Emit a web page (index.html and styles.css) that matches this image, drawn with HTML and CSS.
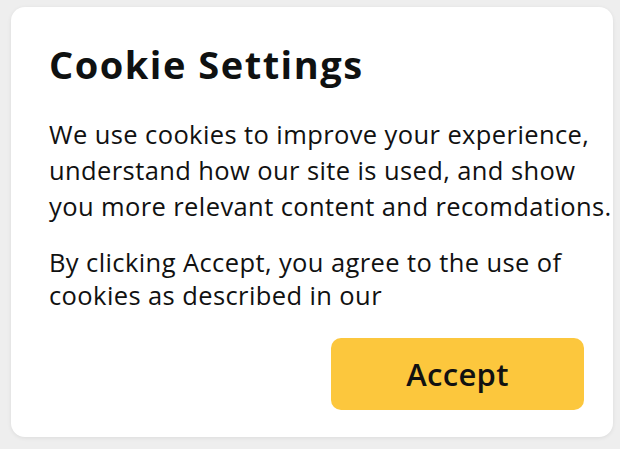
FILE: index.html
```html
<!DOCTYPE html>
<html>
<head>
<meta charset="utf-8">
<link rel="stylesheet" href="styles.css">
</head>
<body>
<div class="card">
  <h1 class="title">Cookie Settings</h1>
  <p class="text">We use cookies to improve your experience,<br>understand how our site is used, and show<br>you more relevant content and recomdations.</p>
  <p class="text second">By clicking Accept, you agree to the use of<br>cookies as described in our</p>
  <div class="actions">
    <button class="accept">Accept</button>
  </div>
</div>
</body>
</html>
```
FILE: styles.css
```css
html, body {
  margin: 0;
  padding: 0;
  background: #eeeeee;
}
body {
  width: 620px;
  height: 449px;
  padding: 7px 7px 12px 11px;
  box-sizing: border-box;
  font-family: "Open Sans", "Noto Sans", sans-serif;
  color: #111111;
}
.card {
  background: #ffffff;
  border-radius: 14px;
  height: 430px;
  box-sizing: border-box;
  padding: 35px 29px 27px 38px;
  box-shadow: 0 1px 4px rgba(0,0,0,0.08);
  display: flex;
  flex-direction: column;
}
.title {
  margin: 0;
  font-size: 38px;
  line-height: 44px;
  font-weight: 700;
  letter-spacing: 1.5px;
  color: #0f1111;
}
.text {
  margin: 30px 0 0 0;
  font-size: 25.5px;
  line-height: 36px;
  white-space: nowrap;
  letter-spacing: 0.4px;
}
.text.second {
  margin-top: 22px;
  line-height: 33px;
}
.actions {
  margin-top: auto;
  display: flex;
  justify-content: flex-end;
}
.accept {
  width: 253px;
  height: 72px;
  border: none;
  border-radius: 10px;
  background: #fcc73d;
  font-family: "Open Sans", "Noto Sans", sans-serif;
  font-size: 31px;
  font-weight: 600;
  color: #111111;
  letter-spacing: 0.3px;
  padding: 0;
}
```
